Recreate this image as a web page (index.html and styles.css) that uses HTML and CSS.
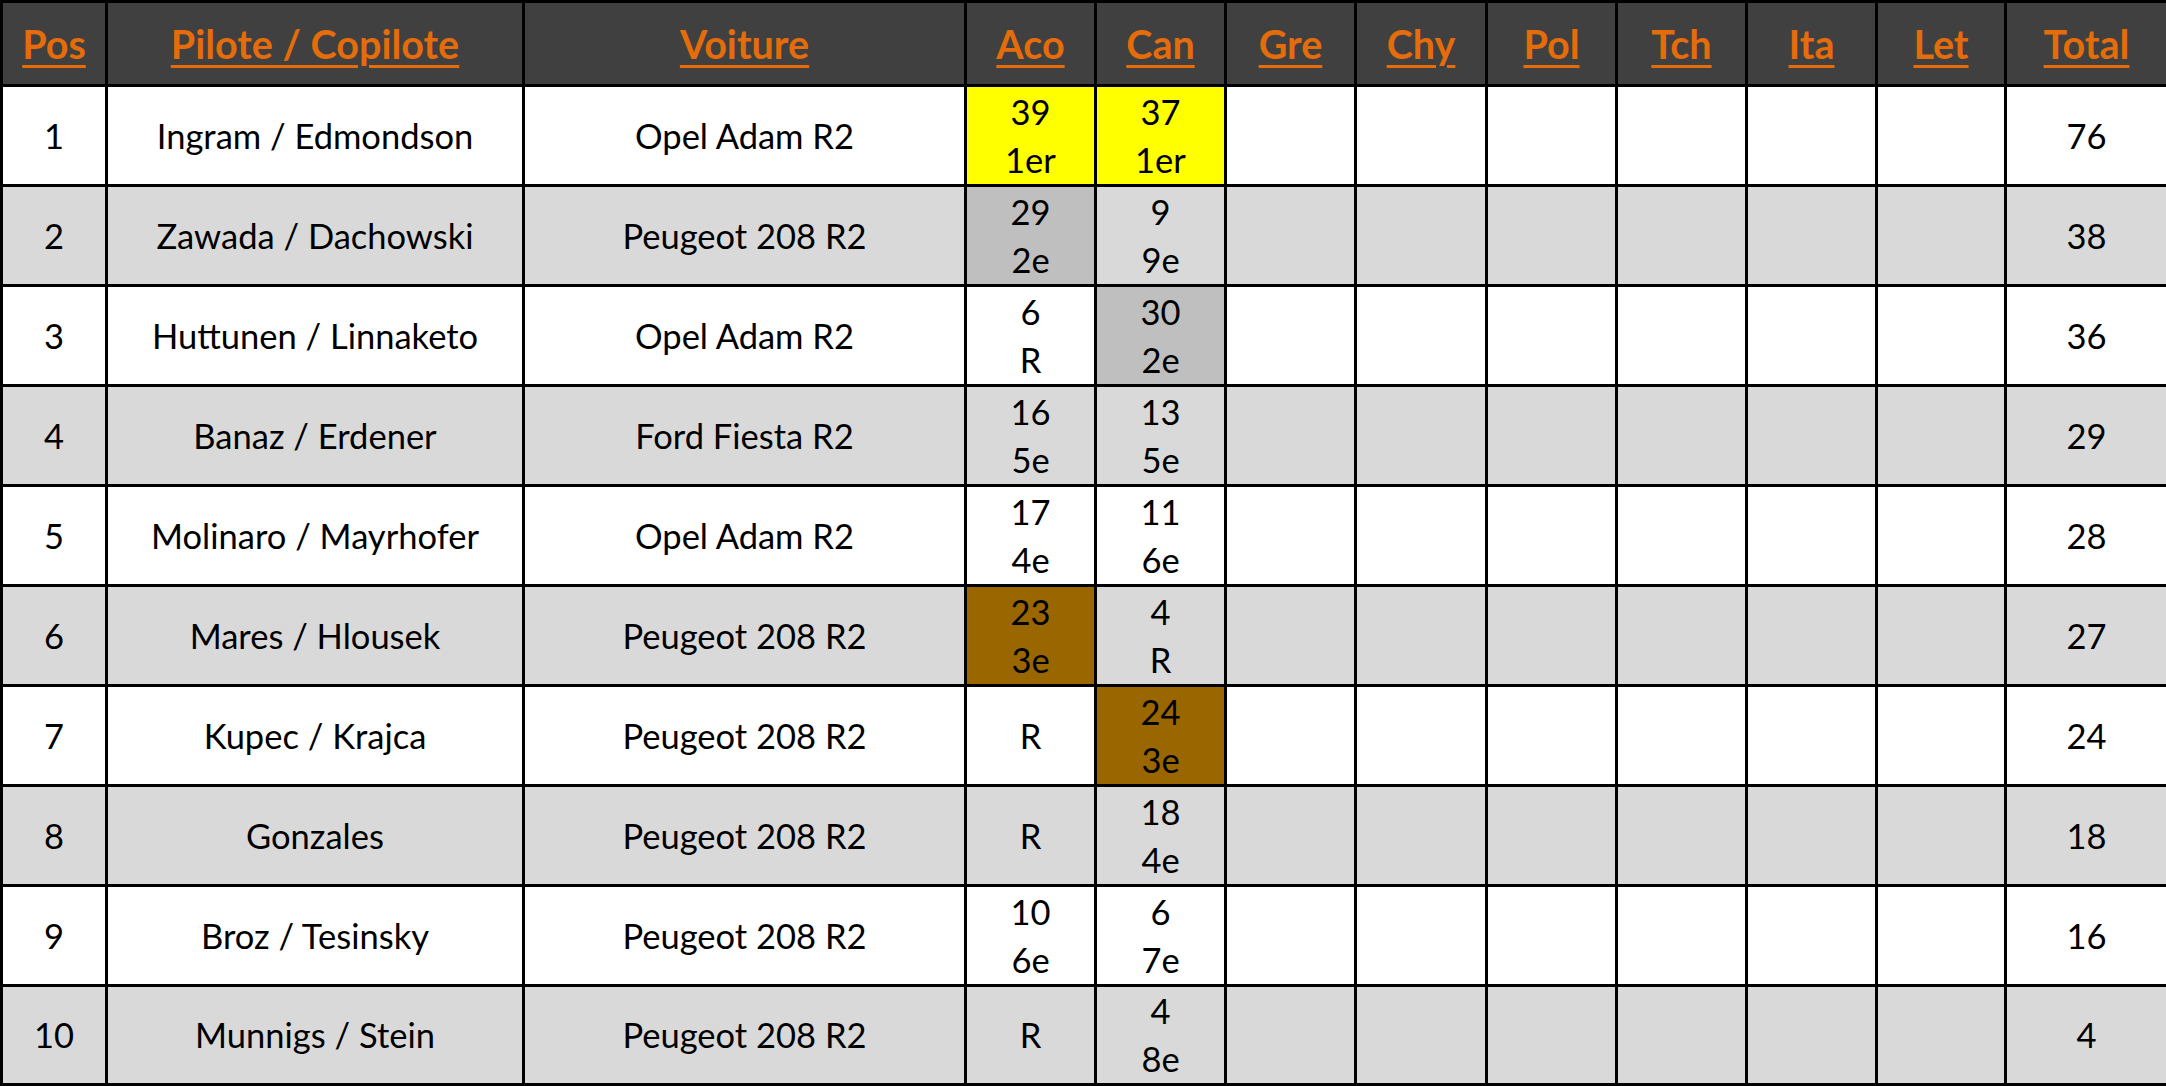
FILE: index.html
```html
<!DOCTYPE html>
<html lang="fr">
<head>
<meta charset="utf-8">
<title>Classement</title>
<link rel="stylesheet" href="styles.css">
</head>
<body>
<table class="standings">
  <colgroup>
    <col class="c-pos"><col class="c-crew"><col class="c-car">
    <col class="c-ev"><col class="c-ev"><col class="c-ev"><col class="c-ev7"><col class="c-ev"><col class="c-ev"><col class="c-ev"><col class="c-ev9">
    <col class="c-total">
  </colgroup>
  <thead>
    <tr>
      <th><span>Pos</span></th>
      <th><span>Pilote / Copilote</span></th>
      <th><span>Voiture</span></th>
      <th><span>Aco</span></th>
      <th><span>Can</span></th>
      <th><span>Gre</span></th>
      <th><span>Chy</span></th>
      <th><span>Pol</span></th>
      <th><span>Tch</span></th>
      <th><span>Ita</span></th>
      <th><span>Let</span></th>
      <th><span>Total</span></th>
    </tr>
  </thead>
  <tbody>
    <tr>
      <td>1</td><td>Ingram / Edmondson</td><td>Opel Adam R2</td>
      <td class="gold">39<br>1er</td><td class="gold">37<br>1er</td>
      <td></td><td></td><td></td><td></td><td></td><td></td><td>76</td>
    </tr>
    <tr class="alt">
      <td>2</td><td>Zawada / Dachowski</td><td>Peugeot 208 R2</td>
      <td class="silver">29<br>2e</td><td>9<br>9e</td>
      <td></td><td></td><td></td><td></td><td></td><td></td><td>38</td>
    </tr>
    <tr>
      <td>3</td><td>Huttunen / Linnaketo</td><td>Opel Adam R2</td>
      <td>6<br>R</td><td class="silver">30<br>2e</td>
      <td></td><td></td><td></td><td></td><td></td><td></td><td>36</td>
    </tr>
    <tr class="alt">
      <td>4</td><td>Banaz / Erdener</td><td>Ford Fiesta R2</td>
      <td>16<br>5e</td><td>13<br>5e</td>
      <td></td><td></td><td></td><td></td><td></td><td></td><td>29</td>
    </tr>
    <tr>
      <td>5</td><td>Molinaro / Mayrhofer</td><td>Opel Adam R2</td>
      <td>17<br>4e</td><td>11<br>6e</td>
      <td></td><td></td><td></td><td></td><td></td><td></td><td>28</td>
    </tr>
    <tr class="alt">
      <td>6</td><td>Mares / Hlousek</td><td>Peugeot 208 R2</td>
      <td class="bronze">23<br>3e</td><td>4<br>R</td>
      <td></td><td></td><td></td><td></td><td></td><td></td><td>27</td>
    </tr>
    <tr>
      <td>7</td><td>Kupec / Krajca</td><td>Peugeot 208 R2</td>
      <td>R</td><td class="bronze">24<br>3e</td>
      <td></td><td></td><td></td><td></td><td></td><td></td><td>24</td>
    </tr>
    <tr class="alt">
      <td>8</td><td>Gonzales</td><td>Peugeot 208 R2</td>
      <td>R</td><td>18<br>4e</td>
      <td></td><td></td><td></td><td></td><td></td><td></td><td>18</td>
    </tr>
    <tr>
      <td>9</td><td>Broz / Tesinsky</td><td>Peugeot 208 R2</td>
      <td>10<br>6e</td><td>6<br>7e</td>
      <td></td><td></td><td></td><td></td><td></td><td></td><td>16</td>
    </tr>
    <tr class="alt last">
      <td>10</td><td>Munnigs / Stein</td><td>Peugeot 208 R2</td>
      <td>R</td><td>4<br>8e</td>
      <td></td><td></td><td></td><td></td><td></td><td></td><td>4</td>
    </tr>
  </tbody>
</table>
</body>
</html>
```

FILE: styles.css
```css
html, body {
  margin: 0;
  padding: 0;
  background: #ffffff;
}

.standings {
  border-collapse: collapse;
  table-layout: fixed;
  width: 2166px;
  font-family: "Lato", "Open Sans", sans-serif;
  color: #000;
}

.c-pos { width: 105px; }
.c-crew { width: 417px; }
.c-car { width: 442px; }
.c-ev { width: 130px; }
.c-ev7 { width: 131px; }
.c-ev9 { width: 129px; }
.c-total { width: 162px; }

.standings th,
.standings td {
  border: 3px solid #000;
  padding: 0;
  text-align: center;
  vertical-align: middle;
}

.standings thead tr {
  height: 84px;
}

.standings th {
  background: #404040;
  color: #e46c0a;
  font-weight: 700;
  font-size: 39.5px;
  line-height: 44px;
}

.standings th span {
  text-decoration: underline;
  text-decoration-thickness: 3px;
  text-underline-offset: 6px;
}

.standings tbody tr {
  height: 100px;
}

.standings tbody tr.last {
  height: 99px;
}

.standings td {
  font-size: 34.5px;
  line-height: 48px;
  background: #ffffff;
}

.standings tr.alt td {
  background: #d9d9d9;
}

.standings tr td.gold { background: #ffff00; }
.standings tr td.silver { background: #bfbfbf; }
.standings tr td.bronze { background: #996600; }
```
